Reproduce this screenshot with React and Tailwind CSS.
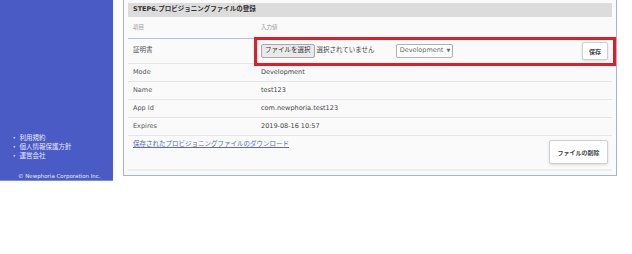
export default function App() {
  const font = { fontFamily: '"DejaVu Sans", "Noto Sans CJK JP", sans-serif' };
  const rows = [
    ["Mode", "Development"],
    ["Name", "test123"],
    ["App Id", "com.newphoria.test123"],
    ["Expires", "2019-08-16 10:57"],
  ];

  return (
    <div className="relative flex w-[632px] h-[254px] bg-white items-start" style={font}>
      {/* Sidebar */}
      <aside className="w-[113px] h-[181px] bg-[#4a5bc6] border-b border-[#7f8cd8] flex flex-col justify-end text-[#e6e9fb]">
        <ul className="pl-[11px] mb-[11px] text-[6.5px] leading-[9px]">
          <li>・ 利用規約</li>
          <li>・ 個人情報保護方針</li>
          <li>・ 運営会社</li>
        </ul>
        <p className="pl-[18px] text-[5.5px] leading-[8px]">© Newphoria Corporation Inc.</p>
      </aside>

      {/* Main panel */}
      <main className="ml-[10px] w-[494px] h-[176px] bg-[#fafafa] border-x border-b border-[#a9afe6] px-[4px] flex flex-col">
        <div className="mt-[3px] h-[14px] bg-[#dcdcdc] pl-[5px] flex items-center text-[6.5px] font-bold text-[#333]">
          STEP6.プロビジョニングファイルの登録
        </div>

        <div className="h-[22px] flex items-center border-b border-[#b7bde9] text-[5.5px] text-[#999]">
          <span className="w-[133px] pl-[5px]">項目</span>
          <span>入力値</span>
        </div>

        <div className="h-[25px] flex items-center border-b border-[#e6e6e6] text-[6.5px] text-[#555]">
          <span className="w-[133px] pl-[5px]">証明書</span>
          <div className="flex-1 flex items-center">
            <button className="h-[14px] px-[3px] bg-[#e9e9e9] border border-[#a8a8a8] rounded-[2px] text-[#333] text-[6.5px]">
              ファイルを選択
            </button>
            <span className="ml-[2px] text-[#444]">選択されていません</span>
            <div className="ml-[21px] h-[14px] w-[57px] border border-[#b0b0b0] rounded-[2px] bg-white flex items-center pl-[3px] text-[#666]">
              Development <span className="ml-[3px] text-[5px]">▼</span>
            </div>
            <button className="ml-auto mr-[4px] h-[18px] w-[26px] bg-white border border-[#cfcfcf] rounded-[2px] shadow-sm text-[6px] font-bold text-[#444]">
              保存
            </button>
          </div>
        </div>

        {rows.map(([k, v]) => (
          <div key={k} className="h-[18px] flex items-center border-b border-[#e6e6e6] text-[6.5px] text-[#555]">
            <span className="w-[133px] pl-[5px]">{k}</span>
            <span className="text-[#444]">{v}</span>
          </div>
        ))}

        <div className="flex-1 flex items-start pt-[3px] pr-[4px]">
          <a href="#" className="pl-[5px] pt-[1px] text-[6.5px] text-[#5868cc] underline">
            保存されたプロビジョニングファイルのダウンロード
          </a>
          <button className="ml-auto mt-[1px] h-[24px] w-[59px] bg-white border border-[#cfcfcf] rounded-[2px] shadow-sm text-[6px] font-bold text-[#444]">
            ファイルの削除
          </button>
        </div>
        <div className="h-[2px] bg-[#eeeeee] mb-[4px]" />
      </main>

      {/* Annotation highlight */}
      <div className="absolute left-[254px] top-[37px] w-[362px] h-[29px] border-[3px] border-[#e51c23] pointer-events-none" />
    </div>
  );
}
